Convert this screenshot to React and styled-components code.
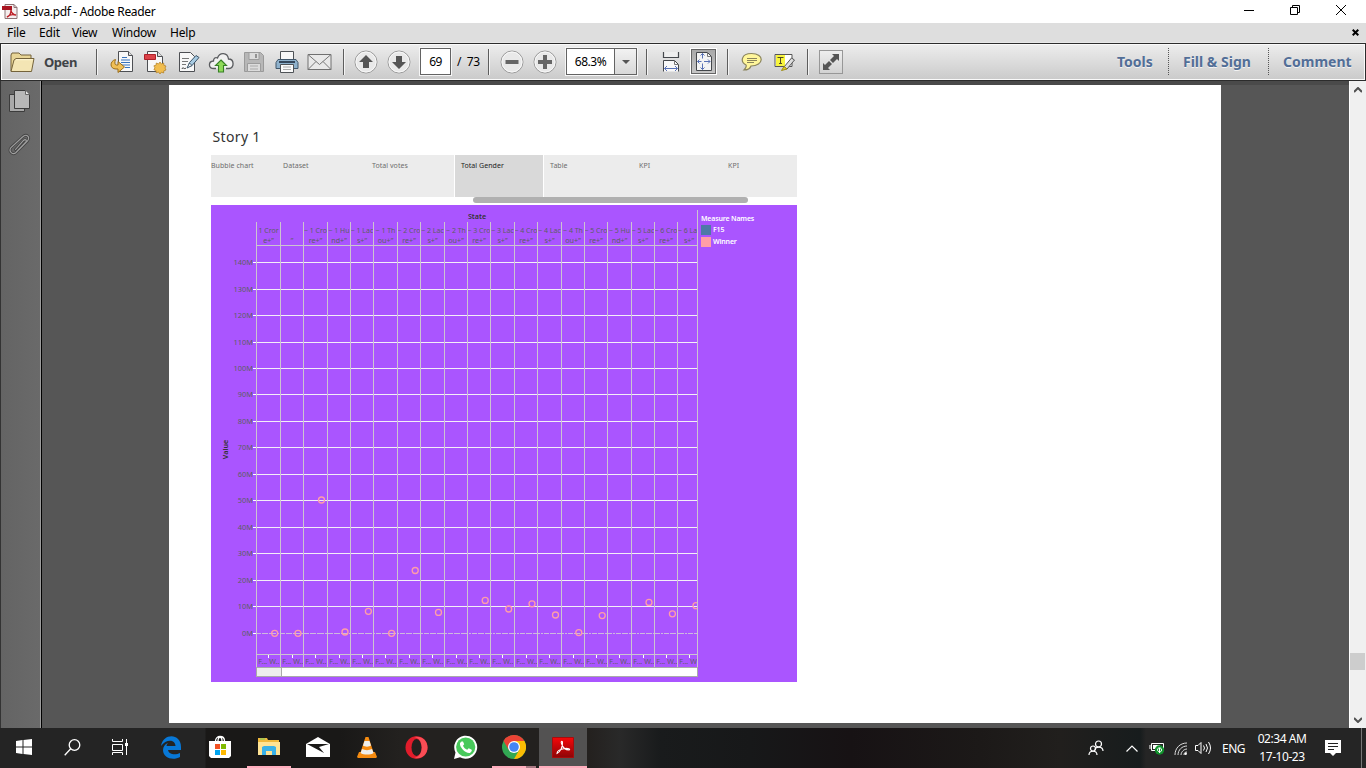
import React from "react";
import styled, { createGlobalStyle, css } from "styled-components";

const Global = createGlobalStyle`
  * { box-sizing: border-box; }
  body { margin: 0; background: #565656; overflow: hidden; }
  svg { display: block; flex: none; }
`;

const ui = `"Noto Sans", "Open Sans", sans-serif`;

const Screen = styled.div`
  width: 1366px;
  height: 768px;
  display: flex;
  flex-direction: column;
  overflow: hidden;
  font-family: ${ui};
  font-size: 12px;
  color: #000;
`;

/* Holds a text run at a fixed width so neighbouring items keep their place */
const Label = styled.span`
  display: inline-block;
  flex: none;
  white-space: pre;
  width: ${(p) => (p.$w ? `${p.$w}px` : "auto")};
  letter-spacing: ${(p) => p.$ls || 0}px;
`;

const TitleBar = styled.header`
  height: 23px;
  background: #fff;
  display: flex;
  align-items: center;
  padding-left: 2px;
  gap: 4px;
  line-height: 23px;
`;

const WindowButtons = styled.div`
  margin-left: auto;
  margin-right: 2px;
  display: flex;
  align-items: center;
  height: 21px;
  padding-bottom: 3px;
`;

const WindowButton = styled.div`
  width: 46px;
  display: flex;
  justify-content: center;
`;

const MenuBar = styled.nav`
  height: 20px;
  background: #dedede;
  display: flex;
  align-items: center;
  padding-left: 7px;
  padding-right: 7px;
  line-height: 20px;
  border-bottom: 1px solid #e8e8e8;
  & > svg { margin-left: auto; }
`;

const ToolBar = styled.div`
  height: 38px;
  border: 1px solid #2c2c2c;
  background: linear-gradient(#ededed, #cacaca);
  box-shadow: inset 0 0 0 1px #fafafa;
  display: flex;
  align-items: center;
  padding-bottom: 1px;
`;

const OpenButton = styled.div`
  width: 95px;
  padding-left: 9px;
  display: flex;
  align-items: center;
  gap: 9px;
  font-size: 13px;
  font-weight: 700;
  letter-spacing: -0.5px;
  color: #404347;
`;

const Divider = styled.i`
  width: 2px;
  height: 26px;
  background: linear-gradient(90deg, #5d5d5d 50%, #f4f4f4 50%);
  flex: none;
`;

const Slot = styled.div`
  width: ${(p) => p.$w || 33}px;
  height: 35px;
  flex: none;
  display: flex;
  align-items: center;
  justify-content: center;
`;

const Gap = styled.i`
  flex: none;
  width: ${(p) => p.$w}px;
`;

const PageInput = styled.div`
  width: 31px;
  height: 27px;
  border: 1px solid #636363;
  background: #fff;
  box-shadow: 0 0 0 1px #f6f6f6;
  text-align: center;
  line-height: 25px;
  font-size: 12px;
  letter-spacing: -0.5px;
`;

const ZoomBox = styled(PageInput)`
  width: 71px;
  display: flex;
`;

const ZoomValue = styled.div`
  width: 47px;
`;

const ZoomArrow = styled.div`
  width: 22px;
  border-left: 1px solid #636363;
  background: linear-gradient(#f2f2f2, #d8d8d8);
  display: flex;
  align-items: center;
  justify-content: center;
`;

const Pressed = styled.div`
  width: 27px;
  height: 27px;
  border: 1px solid #fff;
  display: flex;
  align-items: center;
  justify-content: center;
  & > div {
    width: 25px;
    height: 25px;
    background: linear-gradient(#a9a9a9, #c6c6c6);
    border: 1px solid #656565;
    display: flex;
    align-items: center;
    justify-content: center;
  }
`;

const FullScreen = styled.div`
  width: 24px;
  height: 24px;
  border: 1px solid #979797;
  background: linear-gradient(#eee, #d2d2d2);
  display: flex;
  align-items: center;
  justify-content: center;
`;

const Panels = styled.div`
  margin-left: auto;
  display: flex;
  align-items: center;
  margin-right: 12px;
  font-size: 14px;
  font-weight: 700;
  color: #526e97;
  text-shadow: 0 1px 0 #f3f3f3;
`;

const Dotted = styled.i`
  height: 27px;
  width: 1px;
  margin: 0 14px;
  background: repeating-linear-gradient(#555 0 1px, transparent 1px 2px);
`;

const Workspace = styled.main`
  height: 647px;
  display: flex;
  background: #565656;
  box-shadow: inset 0 4px 0 #4a4a4a;
`;

const SideRail = styled.aside`
  width: 42px;
  border-left: 1px solid #333;
  border-right: 1px solid #000;
  background: linear-gradient(90deg, #646464, #6a6a6a);
  box-shadow: inset -1px 0 0 #9b9b9b;
  padding: 8px 0 0 7px;
  display: flex;
  flex-direction: column;
  gap: 20px;
`;

const Sheet = styled.article`
  margin: 4px 0 0 127px;
  width: 1052px;
  height: 638px;
  background: #fff;
  padding: 43px 0 0 42px;
  font-family: "Noto Sans", sans-serif;
`;

const StoryTitle = styled.h1`
  margin: 0 0 0 1.5px;
  height: 27px;
  line-height: 17px;
  font-size: 14px;
  letter-spacing: 0.35px;
  font-weight: 400;
  color: #333;
`;

const StoryNav = styled.div`
  width: 586px;
  height: 42px;
  display: flex;
  background: #ececec;
`;

const StoryPoint = styled.div`
  width: ${(p) => p.$w}px;
  padding: 6px 0 0 ${(p) => p.$pad}px;
  font-size: 7px;
  line-height: 10px;
  letter-spacing: 0.05px;
  white-space: nowrap;
  color: #6c6c6c;
  ${(p) =>
    p.$active &&
    css`
      background: #d9d9d9;
      border: solid #fff;
      border-width: 0 1px;
      color: #222;
    `}
`;

const StoryTrack = styled.div`
  height: 8px;
  width: 586px;
  padding-left: 262px;
  &::before {
    content: "";
    display: block;
    width: 275px;
    height: 6px;
    border-radius: 3px;
    background: #b0b0b0;
  }
`;

const Dashboard = styled.section`
  width: 586px;
  height: 477px;
  background: #aa55ff;
  display: flex;
`;

const Legend = styled.div`
  padding: 9px 0 0 3px;
  color: #fff;
  font-size: 7px;
  line-height: 10px;
  letter-spacing: -0.17px;
  font-weight: 600;
`;

const LegendRow = styled.div`
  display: flex;
  align-items: center;
  gap: 2px;
  height: 12px;
  margin-top: ${(p) => (p.$first ? 0 : -0.5)}px;
  &::before {
    content: "";
    width: 10px;
    height: 10px;
    background: ${(p) => p.$color};
  }
`;

const ScrollBar = styled.div`
  margin-left: auto;
  width: 17px;
  height: 647px;
  background: #f0f0f0;
  border-left: 1px solid #fff;
  display: flex;
  flex-direction: column;
  align-items: center;
  padding: 6px 1px 5px 0;
`;

const ScrollThumb = styled.div`
  width: 15px;
  height: 17px;
  margin: 560px 0 auto;
  background: #cdcdcd;
`;

const TaskBar = styled.footer`
  height: 40px;
  background: linear-gradient(90deg, #242424 0 205px, #191817 206px 340px, #23211f 400px 530px, #24211f 590px, #292929 620px, #191b1c 660px, #171819 750px, #171214 850px, #1c1918 980px, #211f1d 1060px, #171c1d 1140px, #252525 1146px);
  display: flex;
  color: #fff;
`;

const TaskItem = styled.div`
  width: ${(p) => p.$w || 49}px;
  height: 40px;
  flex: none;
  display: flex;
  align-items: center;
  justify-content: center;
  padding-right: ${(p) => p.$shift || 0}px;
  background: ${(p) => (p.$active ? "#535252" : "transparent")};
  border-bottom: 2px solid transparent;
  ${(p) =>
    p.$bar &&
    css`
      border-image: linear-gradient(90deg, transparent 4px, #ffadbd 4px ${p.$bar}px, #a87882 ${p.$bar}px 44px, transparent 44px) 2;
    `}
  ${(p) => p.$active && css`border-bottom-color: #ffadbd;`}
`;

const Tray = styled.div`
  margin-left: auto;
  display: flex;
  align-items: center;
`;

const Clock = styled.div`
  width: 70px;
  text-align: center;
  line-height: 18px;
  font-size: 12px;
  letter-spacing: -0.45px;
  padding-bottom: 1px;
`;

const ShowDesktop = styled.i`
  width: 5px;
  height: 40px;
  border-left: 1px solid #777;
`;

const Svg = ({ w = 24, h = w, children, ...r }) => (
  <svg width={w} height={h} viewBox={`0 0 ${w} ${h}`} fill="none" {...r}>{children}</svg>
);

const PdfFile = () => (
  <Svg w={17} h={17}>
    <path d="M3 1.500h9l3 3v11H3z" fill="#f4eeee" stroke="#8c7375" />
    <path d="M12 1.500v3h3" stroke="#8c7375" />
    <path d="M0 3h10v4H0z" fill="#a91420" />
    <path d="M5 14c3-1 4-4 4-7 0 3 3 5 5 5-3-1-7 0-9 2z" stroke="#bd2028" strokeWidth="1.400" />
  </Svg>
);

const Folder = () => (
  <Svg w={25} h={22}>
    <path d="M1 20V4l1-2h7l2 2h10v3" fill="#e8d596" stroke="#74633b" />
    <path d="M1 20.500 4 9l2-1.500h18l-2.500 13z" fill="#f3e5b4" stroke="#74633b" />
    <path d="M6 8.700h17" stroke="#fff6d6" />
  </Svg>
);

const Convert = () => (
  <Svg>
    <path d="M8.500 1.500h10l4 4v16h-14z" fill="#f8f8f8" stroke="#4d4f53" />
    <path d="M18.500 1.500v4h4" fill="#ddd" stroke="#4d4f53" />
    <path d="M12 7.500h5M11 10h9M11 12.500h9M12 15h8M15 17.500h5" stroke="#3773bd" strokeWidth="1.200" />
    <path d="M5.500 9.500C-.5 11-.5 19 6 19h2v3.500l6.500-5.500L8 11.500V15H6.500c-2 0-2-3-1-5.500z" fill="#f0bf55" stroke="#9b6d18" />
  </Svg>
);

const CreatePdf = () => (
  <Svg>
    <path d="M4.500 1.500h10l5 5v15h-15z" fill="#f8f8f8" stroke="#4d4f53" />
    <path d="M14.500 1.500v5h5" fill="#ddd" stroke="#4d4f53" />
    <path d="M1.500 4.500h11v5h-11z" fill="#dc4248" stroke="#ad2029" />
    <path d="m17 12 1.400 2 2.300-1 .2 2.400 2.100.6-1 2 1 2-2.200.8-.2 2.200-2.300-.8L17 24l-1.500-2-2.300.8-.2-2.300-2.100-.8 1-1.900-1-2 2.200-.6.200-2.200 2.300.9z" fill="#f1bd4e" stroke="#af7b20" strokeWidth=".7" />
  </Svg>
);

const Sign = () => (
  <Svg>
    <path d="M3.500 2.500h11l4 4v15h-15z" fill="#f8f8f8" stroke="#4d4f53" />
    <path d="M6 8.500h7M6 11.500h6M6 14.500h4" stroke="#777" />
    <path d="M6 19c1-3 2 1 4-1" stroke="#333" />
    <path d="m12 17 1.500-4.500 6.500-7 3 2-7 8z" fill="#a8cbe2" stroke="#3d566b" />
    <path d="m11 18 2.500-5 2.500 2.500z" fill="#fff" stroke="#3d566b" />
  </Svg>
);

const Cloud = () => (
  <Svg w={26} h={22}>
    <path d="M8 17.500H6c-6 0-6-7-.5-7.500 0-3 2-4 4-3 2-6 10-6 11 1 6 0 6 9.500.5 9.500h-3" fill="#f1f1f1" stroke="#595b5e" strokeWidth="1.300" />
    <path d="m13 9 5.500 5.500H15.500v6.500h-5v-6.500h-3z" fill="#8fda59" stroke="#378026" strokeWidth="1.100" />
  </Svg>
);

const Save = () => (
  <Svg w={22} h={22}>
    <path d="M1.500 1.500h16l3 3v16h-19z" fill="#b7b7b7" stroke="#9a9a9a" />
    <path d="M6 1.500h10v7H6zM4.500 12.500h13v8h-13z" fill="#dcdcdc" stroke="#9c9c9c" />
    <path d="M12 3h2v4h-2z" fill="#929292" /><path d="M7 15h8M7 18h8" stroke="#aaa" />
  </Svg>
);

const Print = () => (
  <Svg w={24} h={24}>
    <path d="M5.500 1.500h13V10h-13z" fill="#f8f8f8" stroke="#4f5357" />
    <path d="M3 9.500h18l2 3v6H1v-6z" fill="#8eb1cc" stroke="#41576b" />
    <path d="M4 12h16" stroke="#34465a" strokeWidth="2" />
    <path d="M5.500 14.500h13v8h-13z" fill="#fafafa" stroke="#4f5357" />
    <path d="M8 17h8M8 19.500h8" stroke="#aaa" />
  </Svg>
);

const Mail = () => (
  <Svg w={25} h={18}>
    <path d="M1 1.500h23v15H1z" fill="#e9e9e9" stroke="#707070" />
    <path d="m1 1.500 11.500 10L24 1.500M1 16.500l8-8m15 8-8-8" stroke="#777" />
  </Svg>
);

const Round = ({ children }) => (
  <Svg w={24}>
    <circle cx="12" cy="12" r="11" fill="#e9e9e9" stroke="#9a9a9a" />
    <circle cx="12" cy="12" r="10" stroke="#f8f8f8" />
    {children}
  </Svg>
);

const FitWidth = () => (
  <Svg w={18} h={22}>
    <path d="M1.500 1v5.500h15V1" fill="#eee" stroke="#44474b" strokeWidth="1.200" />
    <path d="M1.500 20.500v-11h11l4 4v7" fill="#f8f8f8" stroke="#44474b" />
    <path d="M12.500 10v3.500H17" stroke="#777" />
    <path d="M2.500 17.500h13M5 15l-2.500 2.500L5 20m8-5 2.500 2.500L13 20" stroke="#5871b5" />
  </Svg>
);

const FitPage = () => (
  <Svg w={18} h={21}>
    <path d="M1.500 1.500h11l4 4v14h-15z" fill="#f4f4f4" stroke="#44474b" />
    <path d="M12.500 1.500v4h4" stroke="#777" />
    <path d="M7.500 2.500v5m-2-3 2-2 2 2M7.500 12.500v6m-2-2 2 2 2-2M2.500 10.500h4m-2-2-2 2 2 2M9 10.500h6m-2-2 2 2-2 2" stroke="#5871b5" />
  </Svg>
);

const Note = () => (
  <Svg w={22} h={20}>
    <path d="M10.500 1.500C0 1.500-1 10 5 13c1 2-1 4-2 5 3 0 6-1 7-4 13 0 14-12.500.5-12.500z" fill="#fff69b" stroke="#8a845c" strokeWidth="1.200" />
    <path d="M6 6.500h10M6 8.500h10M6 10.500h7" stroke="#8a845c" />
  </Svg>
);

const Highlight = () => (
  <Svg w={22} h={20}>
    <path d="M1 2.500h17v12H1z" fill="#fff" stroke="#555" />
    <path d="M2 3h9v11H2z" fill="#f8f53e" />
    <path d="M3.500 5.500h6M6.500 5.500v6M5 11.500h3" stroke="#514b25" />
    <path d="m10 15 7.500-9 3 2-7.500 9z" fill="#ddd" stroke="#555" />
    <path d="m7.500 18.500 2.500-4 3 2.500z" fill="#e4d11f" stroke="#9b8b19" />
  </Svg>
);

const Pages = () => (
  <Svg w={24} h={24}>
    <path d="M1.500 5.500h15v17h-15z" fill="#a9a9a9" stroke="#3c3c3c" />
    <path d="M6.500 1.500h11l4 4v14h-15z" fill="#b8b8b8" stroke="#3c3c3c" />
    <path d="M17.500 1.500v4h4" fill="#e5e5e5" stroke="#666" />
  </Svg>
);

const clipWire = "m7.500 16.500 8-9c2-2 4 0 2 2l-9.500 10c-3 3-8-1-5-5L14.500 4c4-4 8 0 5 4l-9 9";

const Clip = () => (
  <Svg w={24} h={26}>
    <g strokeLinecap="round">
      <path d={clipWire} stroke="#444" strokeWidth="2.800" />
      <path d={clipWire} stroke="#a0a0a0" strokeWidth="1.100" />
    </g>
  </Svg>
);

const lines = [256, 280, 303, 327, 350, 373, 397, 420, 444, 467, 490, 514, 537, 561, 584, 607, 631, 654, 677, 697];
const heads = [
  ["1 Cror", "e+”"], ["", "”"], ["~ 1 Cro", "re+”"], ["~ 1 Hu", "nd+”"], ["~ 1 Lac", "s+”"], ["~ 1 Th", "ou+”"],
  ["~ 2 Cro", "re+”"], ["~ 2 Lac", "s+”"], ["~ 2 Th", "ou+”"], ["~ 3 Cro", "re+”"], ["~ 3 Lac", "s+”"], ["~ 4 Cro", "re+”"],
  ["~ 4 Lac", "s+”"], ["~ 4 Th", "ou+”"], ["~ 5 Cro", "re+”"], ["~ 5 Hu", "nd+”"], ["~ 5 Lac", "s+”"], ["~ 6 Cro", "re+”"], ["~ 6 La", "s+”"],
];
const levels = [633, 606, 580, 553, 527, 500, 474, 447, 421, 394, 368, 342, 315, 289, 262];
const points = [
  [274.700, 633.300], [298, 633.300], [321.500, 500], [345, 632], [368.400, 611.300], [391.600, 633.300], [415.200, 570.500], [438.500, 612.400],
  [485.200, 600.400], [508.700, 609], [532, 603.800], [555.500, 615], [578.800, 632.600], [602.200, 615.600], [649, 602.400], [672.400, 613.800], [696, 605.700],
];

const Chart = () => (
  <svg width="487" height="477" viewBox="211 205 487 477" fontFamily="Noto Sans, sans-serif" fontSize="7.2">
    <defs><clipPath id="plot"><path d="M256 205h441v477H256z" /></clipPath></defs>
    <text x="477" y="219" textAnchor="middle" fontWeight="600" fill="#333">State</text>
    <text transform="translate(228 449.500) rotate(-90)" textAnchor="middle" fontWeight="600" fill="#333">Value</text>
    <g fill="#5c5f62" clipPath="url(#plot)">
      {heads.map(([a, b], i) => {
        const c = (i === 18 ? 689 : (lines[i] + lines[i + 1]) / 2 + 0.5);
        return (
          <g key={i} textAnchor="middle">
            <text x={i === 18 ? 687.5 : c} y="233" fontSize="7">{a}</text>
            <text x={c} y="243">{b}</text>
            <text x={lines[i] + 2.200} y="664" textAnchor="start">F...</text>
            <text x={lines[i] + 13.300} y="664" textAnchor="start">{i === 18 ? "W" : "W.."}</text>
          </g>
        );
      })}
    </g>
    <g shapeRendering="crispEdges">
      {levels.map((y, i) => (
        <g key={y}>
          {i === 0
            ? <path d="M256 633.500H697" stroke="#ceb8de" strokeDasharray="5 1 6 1 7 1 2 1" />
            : <path d={`M256 ${y + 0.5}H697`} stroke="#f4eef8" />}
          <path d={`M253 ${y + 0.5}h4`} stroke="#fff" />
        </g>
      ))}
      {lines.map((x) => <path key={x} d={`M${x + 0.5} ${x === 697 ? 210 : 222}V667`} stroke="#ccc4d0" />)}
      {lines.slice(0, -1).map((x) => <path key={x} d={`M${x + 12.500} 655v3`} stroke="#fff" />)}
      <path d="M256 245.500h441M256 654.500h441" stroke="#ccc4d0" />
      <path d="M256.500 667.500h441v9h-441z" fill="#fff" stroke="#aaa" />
      <path d="M256.500 667.500h25v9h-25z" fill="#eee" stroke="#aaa" />
    </g>
    {levels.map((y, i) => <text key={y} x="253" y={y + 3} textAnchor="end" fontSize="7.4" fill="#5c5f62">{i * 10}M</text>)}
    <g clipPath="url(#plot)" fill="none" stroke="#ff9da7" strokeWidth="1.300">
      {points.map(([x, y]) => <circle key={x} cx={x} cy={y} r="3" />)}
    </g>
  </svg>
);

const EdgeIcon = () => (
  <Svg w={22} h={23}><path d="M1 10C3-3 21-3 21 11v3H8c1 5 8 5 12 3v4C13 25 3 22 3 14c0-3 2-6 5-7-1 1-1.500 2-1.500 3h9C15 3 6 3 1 10z" fill="#0878d7" /></Svg>
);
const StoreIcon = () => (
  <Svg w={24} h={24}>
    <path d="M7.500 6c0-6 9-6 9 0M10 6c0-5 4-5 4 0" stroke="#fff" strokeWidth="1.300" />
    <path d="M1 6h22v15l-2 2H3l-2-2z" fill="#fff" />
    <path d="M7 9h5v5H7z" fill="#f25022" /><path d="M13 9h5v5h-5z" fill="#7fba00" /><path d="M7 15h5v5H7z" fill="#00a4ef" /><path d="M13 15h5v5h-5z" fill="#ffb900" />
  </Svg>
);
const ExplorerIcon = () => (
  <Svg w={22} h={20}>
    <path d="M0 1h9l1 2h11v15H0z" fill="#efb93d" /><path d="M0 5h22v13H0z" fill="#ffe394" />
    <path d="M4 18v-8l2-1h10l2 1v8h-4v-4H8v4z" fill="#39b1e8" /><path d="M2 2h5" stroke="#6fcb62" />
  </Svg>
);
const Cone = () => (
  <Svg w={22} h={24}>
    <path d="m3 17-2 5 1 1h18l1-1-2-5z" fill="#f58b10" /><path d="M9.500 2h3L18 19H4z" fill="#f58b10" />
    <path d="m8.500 6-1.500 4.500c2 1.500 6 1.500 8 0L13.500 6zM6 14l-1.400 4c3 2 10 2 13 0L16 14c-3 1.500-7 1.500-10 0z" fill="#eeeeec" />
  </Svg>
);
const WhatsApp = () => (
  <Svg w={25} h={25}>
    <path d="m1 24 1.500-6.500A11.500 11.500 0 1 1 7 22.200z" fill="#fff" /><circle cx="12.700" cy="12" r="9.600" fill="#48c95b" />
    <path d="M8.500 6.500 7 8c-1 4 6 11 10 10l1.800-2-.1-1.200-3-1.500-1.500 1.500c-2-.8-3.400-2.200-4.200-4l1.200-1.500-1.200-2.700z" fill="#fff" />
  </Svg>
);
const Chrome = () => (
  <Svg w={24}>
    <circle cx="12" cy="12" r="12" fill="#32a853" />
    <path d="M12 12 1.600 6A12 12 0 0 1 22.400 6z" fill="#ea4335" /><path d="M12 6h10.400A12 12 0 0 1 12 24l5.200-9z" fill="#fbbc04" />
    <path d="M1.600 6 6.800 15 12 6z" fill="#ea4335" /><circle cx="12" cy="12" r="6" fill="#fff" /><circle cx="12" cy="12" r="4.800" fill="#4285f4" />
  </Svg>
);
const Acrobat = () => (
  <Svg w={22} h={21}>
    <defs><linearGradient id="red" x2="0" y2="1"><stop stopColor="#f60709" /><stop offset="1" stopColor="#8c0507" /></linearGradient></defs>
    <path d="M.5.500h21v20H.5z" fill="url(#red)" stroke="#a80c0c" />
    <path d="M5 16.500c3-1 6-7 5.500-11-.2-2-2-1-1 1 1.500 5 4 6.500 7.500 6.500 2-.7-1-2-4-1.500-4 .5-8 2-8 5z" stroke="#fff" strokeWidth="1.100" />
  </Svg>
);

const icons = {
  start: <Svg w={16} h={16}><path d="m0 2 6.500-1v6.500H0zM7.500.900 16 0v7.500H7.500zM0 8.500h6.500V15L0 14zM7.500 8.500H16V16l-8.500-1z" fill="#fff" /></Svg>,
  search: <Svg w={17} h={17} stroke="#fff" strokeWidth="1.300"><circle cx="10.500" cy="6" r="5.300" /><path d="m6.700 9.800-6 6.500" /></Svg>,
  tasks: <Svg w={17} h={16} stroke="#fff"><path d="M.5 0v2.500h10V0M.5 5.500h10v6H.5zM.5 16v-2.500h10V16M14.500 0v16" /><path d="M13 4h3v3h-3z" fill="#fff" stroke="none" /></Svg>,
  mail: <Svg w={24} h={20}><path d="m0 7 12-7 12 7v13H0z" fill="#fff" /><path d="m1 7 17 9-5-6 10-3z" fill="#1a1918" /></Svg>,
  opera: <Svg w={23} h={23}><ellipse cx="11.500" cy="11.500" rx="11" ry="11.200" fill="#e11c2b" /><path d="M9 1c18-3 18 24 0 21 10-1 10-20 0-21" fill="#fa4d55" /><ellipse cx="11.500" cy="11.500" rx="5" ry="8.500" fill="#23211f" /></Svg>,
};

export default function App() {
  return (
    <Screen>
      <Global />
      <TitleBar>
        <PdfFile /><Label $ls={-0.33}>selva.pdf - Adobe Reader</Label>
        <WindowButtons>
          <WindowButton><Svg w={10} h={10}><path d="M0 5.500h10" stroke="#000" /></Svg></WindowButton>
          <WindowButton><Svg w={10} h={10} stroke="#000"><path d="M2.500 2V.5h7v7H8M.5 2.500h7v7h-7z" /></Svg></WindowButton>
          <WindowButton><Svg w={10} h={10}><path d="m0 0 10 10M10 0 0 10" stroke="#000" /></Svg></WindowButton>
        </WindowButtons>
      </TitleBar>
      <MenuBar>
        <Label $w={32} $ls={-0.1}>File</Label><Label $w={33} $ls={-0.1}>Edit</Label><Label $w={40} $ls={-0.3}>View</Label><Label $w={58} $ls={-0.25}>Window</Label><Label $ls={-0.2}>Help</Label>
        <Svg w={7} h={7}><path d="m.7.700 5.600 5.600M6.300.700.700 6.300" stroke="#000" strokeWidth="2" /></Svg>
      </MenuBar>
      <ToolBar>
        <OpenButton><Folder /><Label $ls={-0.45}>Open</Label></OpenButton>
        <Divider /><Gap $w={7} />
        <Slot><Convert /></Slot><Slot><CreatePdf /></Slot><Slot><Sign /></Slot><Slot><Cloud /></Slot><Slot><Save /></Slot><Slot><Print /></Slot><Slot><Mail /></Slot>
        <Gap $w={7} /><Divider /><Gap $w={4} />
        <Slot><Round><path d="m12 5 7 7h-4v6H9v-6H5z" fill="#555" /></Round></Slot>
        <Slot><Round><path d="m12 19 7-7h-4V6H9v6H5z" fill="#555" /></Round></Slot>
        <Gap $w={5} /><PageInput>69</PageInput><Gap $w={6} /><Label $w={31} $ls={-0.3}>/  73</Label>
        <Divider /><Gap $w={5} />
        <Slot><Round><path d="M5.500 10h13v4h-13z" fill="#666" /></Round></Slot>
        <Slot><Round><path d="M10 5h4v5h5v4h-5v5h-4v-5H5v-4h5z" fill="#666" /></Round></Slot>
        <Gap $w={5} />
        <ZoomBox><ZoomValue>68.3%</ZoomValue><ZoomArrow><Svg w={8} h={4}><path d="M0 0h8L4 4z" fill="#555" /></Svg></ZoomArrow></ZoomBox>
        <Gap $w={9} /><Divider /><Gap $w={6} />
        <Slot><FitWidth /></Slot><Slot><Pressed><div><FitPage /></div></Pressed></Slot>
        <Gap $w={7} /><Divider /><Gap $w={6} />
        <Slot><Note /></Slot><Slot><Highlight /></Slot>
        <Gap $w={6} /><Divider /><Gap $w={10} />
        <FullScreen><Svg w={20}><path d="M11 2h7v7l-2-2-4 4-3-3 4-4zM9 18H2v-7l2 2 4-4 3 3-4 4z" fill="#555" /></Svg></FullScreen>
        <Panels><Label $w={37}>Tools</Label><Dotted /><Label $w={71}>Fill &amp; Sign</Label><Dotted /><Label $w={70}>Comment</Label></Panels>
      </ToolBar>
      <Workspace>
        <SideRail><Pages /><Clip /></SideRail>
        <Sheet>
          <StoryTitle>Story 1</StoryTitle>
          <StoryNav>
            <StoryPoint $w={66} $pad={0}>Bubble chart</StoryPoint>
            <StoryPoint $w={89} $pad={6}>Dataset</StoryPoint>
            <StoryPoint $w={88} $pad={6}>Total votes</StoryPoint>
            <StoryPoint $w={90} $pad={6} $active>Total Gender</StoryPoint>
            <StoryPoint $w={89} $pad={6}>Table</StoryPoint>
            <StoryPoint $w={89} $pad={6}>KPI</StoryPoint>
            <StoryPoint $w={75} $pad={6}>KPI</StoryPoint>
          </StoryNav>
          <StoryTrack />
          <Dashboard>
            <Chart />
            <Legend>Measure Names<LegendRow $first $color="#4e79a7">F15</LegendRow><LegendRow $color="#ff9da7">Winner</LegendRow></Legend>
          </Dashboard>
        </Sheet>
        <ScrollBar>
          <Svg w={8} h={6}><path d="m0 5 4-4 4 4" stroke="#505050" strokeWidth="2" /></Svg>
          <ScrollThumb />
          <Svg w={8} h={6}><path d="m0 1 4 4 4-4" stroke="#505050" strokeWidth="2" /></Svg>
        </ScrollBar>
      </Workspace>
      <TaskBar>
        <TaskItem $w={48}>{icons.start}</TaskItem><TaskItem $w={48}>{icons.search}</TaskItem><TaskItem $w={48}>{icons.tasks}</TaskItem><Gap $w={3} />
        <TaskItem $shift={1}><EdgeIcon /></TaskItem><TaskItem $w={49} $shift={2}><StoreIcon /></TaskItem><TaskItem $bar={44} $shift={1}><ExplorerIcon /></TaskItem>
        <TaskItem $shift={1}>{icons.mail}</TaskItem><TaskItem $shift={1}><Cone /></TaskItem><TaskItem $shift={1}>{icons.opera}</TaskItem><TaskItem $shift={1}><WhatsApp /></TaskItem>
        <TaskItem $bar={35} $shift={2}><Chrome /></TaskItem><TaskItem $w={48} $active><Acrobat /></TaskItem>
        <Tray>
          <Slot $w={36}><Svg w={16} h={16} stroke="#fff" strokeWidth="1.200"><circle cx="10.500" cy="4" r="3" /><path d="M7 10c0-4 8-4 8 1" /><circle cx="5" cy="8.500" r="2.500" /><path d="M1 15c0-5 8-5 8 0" /></Svg></Slot>
          <Slot $w={36}><Svg w={12} h={7}><path d="m.5 6.500 5.500-5.500 5.500 5.500" stroke="#fff" strokeWidth="1.200" /></Svg></Slot>
          <Slot $w={14}><Svg w={16} h={14}><path d="M2.500 2.500h12v7h-12zM1 4v4" stroke="#fff" /><path d="M4 4h7v4H4z" fill="#fff" /><circle cx="10.500" cy="9" r="4.700" fill="#10922c" /><path d="M10.500 12V7m-2 2c0-3 4-3 4 0s-4 2-4 0" stroke="#fff" /></Svg></Slot>
          <Slot $w={33}><Svg w={14} h={14} stroke="#ddd"><path d="M1 14C1 7 6 2 13 2M4 14c0-5 4-9 9-9M7 14c0-3 3-6 6-6M10 14c0-2 1-3 3-3" /><circle cx="11.700" cy="12.700" r="1.200" fill="#fff" stroke="none" /></Svg></Slot>
          <Slot $w={12}><Svg w={17} h={14} stroke="#fff"><path d="M.5 4.500H3l3-3v11l-3-3H.5zM8.500 4.500q2 2.500 0 5M11 3q3 4 0 8M13.500 1q4 6 0 12" /></Svg></Slot>
          <Gap $w={13} /><Label $w={25} $ls={-0.5}>ENG</Label>
          <Clock>02:34 AM<br />17-10-23</Clock>
          <Slot $w={32}><Svg w={16} h={16}><path d="M0 0h16v13h-5l-3 3-3-3H0z" fill="#fff" /><path d="M3 3.500h10M3 6.500h10M3 9.500h6" stroke="#222" /></Svg></Slot>
          <Gap $w={12} /><ShowDesktop />
        </Tray>
      </TaskBar>
    </Screen>
  );
}
